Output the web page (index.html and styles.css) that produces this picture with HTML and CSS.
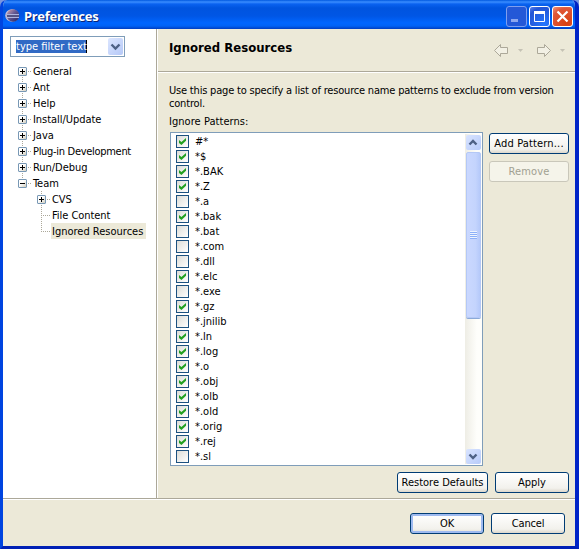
FILE: index.html
```html
<!DOCTYPE html>
<html lang="en">
<head>
<meta charset="utf-8">
<title>Preferences</title>
<link rel="stylesheet" href="styles.css">
</head>
<body>
<div class="window">
  <header class="titlebar">
    <svg class="logo" width="16" height="16" viewBox="0 0 16 16">
      <defs><linearGradient id="orb" x2="1" y2="1"><stop stop-color="#d9a5aa"/><stop offset=".45" stop-color="#625994"/><stop offset="1" stop-color="#23215c"/></linearGradient></defs>
      <ellipse cx="7" cy="7.5" rx="6.8" ry="6.2" fill="#c3bed8"/><circle cx="8" cy="7.5" r="6.2" fill="url(#orb)"/>
      <path d="M1 6.5h13M1 9.5h13" stroke="#aeb4dd"/><path d="M2 8h12" stroke="#555383" stroke-width="2"/>
    </svg>
    <h1>Preferences</h1>
    <div class="controls">
      <span class="control dim"><svg width="21" height="21"><path d="M5 14.5h7" stroke="#8da7ee" stroke-width="3"/></svg></span>
      <span class="control"><svg width="21" height="21"><path d="M5.5 6v9.5h10V6" fill="none" stroke="#fff"/><path d="M5 6.5h11" stroke="#fff" stroke-width="3"/></svg></span>
      <span class="control close"><svg width="21" height="21"><path d="M5.5 5.5l10 10m0-10l-10 10" stroke="#fff" stroke-width="2.2"/></svg></span>
    </div>
  </header>
  <div class="main">
    <nav class="sidebar">
      <div class="combo"><span class="filter">type filter text</span><span class="drop"><svg width="15" height="17"><path d="M3.5 6.5l4 4 4-4" fill="none" stroke="#4d6185" stroke-width="2.4"/></svg></span></div>
      <ul class="tree">
        <li><i class="box plus"></i><span>General</span></li>
        <li><i class="box plus"></i><span>Ant</span></li>
        <li><i class="box plus"></i><span>Help</span></li>
        <li><i class="box plus"></i><span>Install/Update</span></li>
        <li><i class="box plus"></i><span>Java</span></li>
        <li><i class="box plus"></i><span class="plugin">Plug-in Development</span></li>
        <li><i class="box plus"></i><span>Run/Debug</span></li>
        <li class="last"><i class="box"></i><span>Team</span></li>
        <li class="child"><i class="box plus"></i><span>CVS</span></li>
        <li class="child"><i class="leaf"></i><span>File Content</span></li>
        <li class="child last"><i class="leaf"></i><span class="selected">Ignored Resources</span></li>
      </ul>
    </nav>
    <section class="page">
      <div class="heading"><h2>Ignored Resources</h2>
        <svg class="history" width="73" height="13" fill="none" stroke="#aca899">
          <path d="M.5 6.5l6-6v3h7v6h-7v3z" fill="#f2f0e4"/><path d="M24 5h5l-2.5 3z" fill="#c5c2b5" stroke="none"/>
          <path d="M56.500 6.500l-6-6v3h-7v6h7v3z" fill="#f2f0e4"/><path d="M66 5h5l-2.500 3z" fill="#c5c2b5" stroke="none"/>
        </svg>
      </div>
      <div class="body">
        <p>Use this page to specify a list of resource name patterns to exclude from version control.</p>
        <div class="label">Ignore Patterns:</div>
        <div class="columns">
          <div class="list">
            <ul class="patterns">
              <li><i class="check on"></i>#*</li>
              <li><i class="check on"></i>*$</li>
              <li><i class="check on"></i>*.BAK</li>
              <li><i class="check on"></i>*.Z</li>
              <li><i class="check"></i>*.a</li>
              <li><i class="check on"></i>*.bak</li>
              <li><i class="check"></i>*.bat</li>
              <li><i class="check"></i>*.com</li>
              <li><i class="check"></i>*.dll</li>
              <li><i class="check on"></i>*.elc</li>
              <li><i class="check"></i>*.exe</li>
              <li><i class="check on"></i>*.gz</li>
              <li><i class="check"></i>*.jnilib</li>
              <li><i class="check on"></i>*.ln</li>
              <li><i class="check on"></i>*.log</li>
              <li><i class="check on"></i>*.o</li>
              <li><i class="check on"></i>*.obj</li>
              <li><i class="check on"></i>*.olb</li>
              <li><i class="check on"></i>*.old</li>
              <li><i class="check on"></i>*.orig</li>
              <li><i class="check on"></i>*.rej</li>
              <li><i class="check"></i>*.sl</li>
            </ul>
            <div class="scrollbar">
              <span class="arrow"><svg width="14" height="15"><path d="M3.5 9.5l3.5-3.5 3.5 3.5" fill="none" stroke="#4d6185" stroke-width="2.4"/></svg></span>
              <span class="thumb"><i class="grip"></i></span>
              <span class="arrow end"><svg width="14" height="15"><path d="M3.5 5.5l3.5 3.5 3.5-3.5" fill="none" stroke="#4d6185" stroke-width="2.4"/></svg></span>
            </div>
          </div>
          <div class="side"><button>Add Pattern...</button><button disabled>Remove</button></div>
        </div>
        <div class="actions"><button class="restore">Restore Defaults</button><button class="apply">Apply</button></div>
      </div>
    </section>
  </div>
  <footer class="footer"><button class="ok">OK</button><button>Cancel</button></footer>
</div>
</body>
</html>
```
FILE: styles.css
```css
* { box-sizing: border-box; }
html, body, h1, h2, p, ul { margin: 0; padding: 0; }
body { width: 579px; height: 549px; overflow: hidden; background: #7a96df; font: 11px/13px "DejaVu Sans Condensed", "DejaVu Sans", sans-serif; font-stretch: condensed; letter-spacing: -.19px; color: #000; }
ul { list-style: none; }
svg, i { display: block; }
.window { height: 549px; display: flex; flex-direction: column; border: solid; border-width: 0 4px 3px 3px; border-color: #0831d9 #0024c7 #0020b5 #0044e0; border-radius: 7px 7px 0 0; background: #ece9d8; overflow: hidden; }
.titlebar { height: 29px; flex: none; display: flex; align-items: center; margin: 0 -4px 0 -3px; padding: 2px 6px 0 5px; background: linear-gradient(#0058e0 0, #3a8dff 2px, #0a62f0 4px, #0054df 8px, #0056e5 16px, #0066ff 23px, #0062f5 26px, #003dc0 29px); color: #fff; }
h1 { flex: 1; margin-left: 3px; font: bold 13px/18px "Noto Sans", sans-serif; letter-spacing: -.22px; text-shadow: 1px 1px #0b2475; }
.controls { display: flex; gap: 2px; padding-top: 1px; }
.control { width: 21px; height: 21px; border: 1px solid #fff; border-radius: 3px; background: radial-gradient(circle at 75% 90%, #2476ff, #2455d5 75%, #5d82ed); }
.control svg { margin: -1px; }
.dim { border-color: #7f9eee; background: #2458d7; }
.close { background: radial-gradient(circle at 70% 85%, #d94010, #df5637 70%, #f0967e); }
.main { height: 470px; flex: none; display: flex; }
.sidebar { width: 153px; flex: none; background: #fff; padding: 7px 0 0 7px; }
.combo { width: 115px; height: 21px; display: flex; justify-content: space-between; border: 1px solid #7f9db9; padding: 1px; }
.filter { height: 13px; margin: 2px 0 0 4px; background: #316ac5; color: #fff; border-right: 1px solid #000; white-space: nowrap; width: 71px; letter-spacing: 0; }
.drop { width: 15px; height: 17px; border-radius: 2px; background: linear-gradient(135deg, #dce6ff, #b5c8f7); }
.tree { margin-top: 6px; letter-spacing: -.05px; }
.tree li { height: 16px; display: flex; align-items: center; padding-left: 8px; white-space: nowrap; background: repeating-linear-gradient(#aca899 0 1px, #fff 1px 2px) 12px 0 / 1px 16px no-repeat; }
.tree li:first-child { background-position: 12px 8px; }
.tree li.last { background-size: 1px 8px; }
.tree li.child { padding-left: 27px; background-position: 31px 0; }
.box { position: relative; width: 9px; height: 9px; border: 1px solid #7898b5; border-radius: 1px; background: linear-gradient(#000, #000) 1px 3px / 5px 1px no-repeat, linear-gradient(135deg, #fff 40%, #d1cdbd); flex: none; }
.plus { background: linear-gradient(#000, #000) 1px 3px / 5px 1px no-repeat, linear-gradient(#000, #000) 3px 1px / 1px 5px no-repeat, linear-gradient(135deg, #fff 40%, #d1cdbd); }
.box::after { content: ""; position: absolute; left: 9px; top: 3px; width: 3px; border-top: 1px dotted #aca899; }
.leaf { width: 9px; margin-left: 4px; margin-right: -4px; border-top: 1px dotted #aca899; }
.tree span { margin-left: 5px; height: 16px; line-height: 17px; padding: 0 1px; }
.tree .plugin { letter-spacing: -.3px; }
.tree .selected { width: 95px; background: #ece9d8; letter-spacing: 0; }
.page { flex: 1; border-left: 1px solid #aca899; box-shadow: inset 1px 0 #fff; padding-left: 1px; min-width: 0; }
.heading { height: 44px; display: flex; align-items: flex-start; border-bottom: 1px solid #fff; box-shadow: inset 0 -1px #aca899; padding: 10px 8px 0 12px; }
h2 { flex: 1; margin-left: -1px; font: bold 13px/17px "DejaVu Sans Condensed", "DejaVu Sans", sans-serif; font-stretch: condensed; letter-spacing: 0; }
.history { margin-top: 5px; }
.body { padding: 11px 6px 0 12px; }
p { width: 390px; margin-left: -1px; }
.label { margin: 5px 0 4px -1px; letter-spacing: .05px; }
.columns { display: flex; gap: 6px; }
.list { width: 313px; height: 334px; display: flex; border: 1px solid #7f9db9; background: #fff; padding: 1px 0 1px 5px; }
.patterns { flex: 1; }
.patterns li { height: 15px; display: flex; align-items: center; gap: 6px; letter-spacing: 0; }
.check { width: 13px; height: 13px; border: 1px solid #1c5180; background: linear-gradient(135deg, #dcdcd7, #fff); }
.on::before { content: ""; display: block; width: 7px; height: 7px; margin: 2px; background: #21a121; clip-path: polygon(0 28%, 35% 58%, 100% 0, 100% 40%, 35% 100%, 0 70%); }
.scrollbar { width: 17px; display: flex; flex-direction: column; background: linear-gradient(90deg, #eeede5, #fefefb 70%); padding: 1px 1px 0; }
.arrow { height: 15px; border-radius: 2px; background: linear-gradient(135deg, #d9e4ff, #b7cbfa); }
.thumb { height: 166px; margin-top: 2px; border: 1px solid #b4c8f6; border-radius: 2px; background: linear-gradient(90deg, #cad8ff, #c4d4fd 65%, #b5c9fa); box-shadow: 0 1px #8ba9d8; display: grid; place-items: center; }
.grip { width: 7px; height: 8px; background: repeating-linear-gradient(#eef4fe 0 1px, #8cb0f8 1px 2px); }
.end { margin-top: auto; }
.side { display: flex; flex-direction: column; gap: 7px; padding-top: 1px; letter-spacing: .15px; }
button { width: 80px; height: 21px; padding: 0; border: 1px solid #003c74; border-radius: 3px; background: linear-gradient(#fff, #f2f1ec 80%, #dcd7cb); color: #000; font: inherit; letter-spacing: inherit; white-space: nowrap; }
button:disabled { border-color: #c9c7ba; background: #f5f4ea; color: #a1a192; }
.actions { display: flex; justify-content: flex-end; gap: 7px; padding-top: 6px; letter-spacing: 0; }
.restore { width: 91px; }
.apply, .footer button { width: 74px; }
.footer { flex: 1; border-top: 1px solid #fff; box-shadow: 0 -1px #aca899; display: flex; justify-content: flex-end; gap: 7px; padding: 13px 10px 0; position: relative; }
.ok { box-shadow: inset 0 0 0 2px #9ebaf0; }
```
